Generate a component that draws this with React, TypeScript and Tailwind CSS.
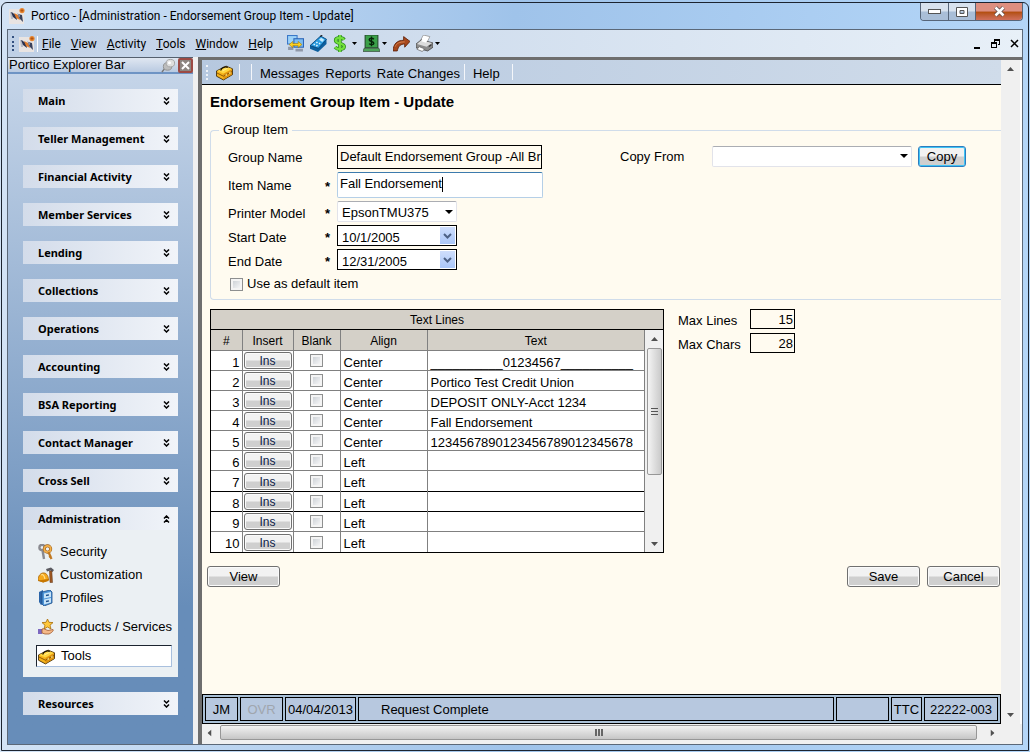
import type { ReactNode } from 'react';

const sections = [
    'Main',
    'Teller Management',
    'Financial Activity',
    'Member Services',
    'Lending',
    'Collections',
    'Operations',
    'Accounting',
    'BSA Reporting',
    'Contact Manager',
    'Cross Sell',
];

const menus = ['File', 'View', 'Activity', 'Tools', 'Window', 'Help'];

const lines = [
    { align: 'Center', text: '__________01234567__________' },
    { align: 'Center', text: 'Portico Test Credit Union' },
    { align: 'Center', text: 'DEPOSIT ONLY-Acct 1234' },
    { align: 'Center', text: 'Fall Endorsement' },
    { align: 'Center', text: '1234567890123456789012345678' },
    { align: 'Left', text: '' },
    { align: 'Left', text: '' },
    { align: 'Left', text: '' },
    { align: 'Left', text: '' },
    { align: 'Left', text: '' },
];

const Svg = ({ size = 16, children }: { size?: number; children: ReactNode }) => (
    <svg width={size} height={size} viewBox="0 0 16 16" className="shrink-0" aria-hidden="true">
        {children}
    </svg>
);

const Logo = () => (
    <Svg>
        <rect y="1" width="15" height="15" fill="#e9e4e2" />
        <path d="M1 4h3v7H2z" fill="#b9bcc6" />
        <path d="M2 4l5 3 1 5-4-3z" fill="#2b3350" />
        <path d="M5 5l4 2 2 5-4-2z" fill="#e07b2c" />
        <path d="M9 6l4 1 1 7-4-4z" fill="#39415c" />
        <path d="M8 5l3 2v3z" fill="#8b93ab" />
        <circle cx="13" cy="2.6" r="2.6" fill="#e8852f" />
        <path d="M11.5 2.6h3M13 1v3" stroke="#a64b10" strokeWidth="0.8" />
    </Svg>
);

const Toolbox = () => (
    <Svg size={17}>
        <path d="M.5 6.500L9.500 2l6 2.500v5.500l-8.500 5-6.500-3.500z" fill="#f6b41c" stroke="#3a2400" strokeWidth="0.8" />
        <path d="M1 6.500L9.500 2.500l5.500 2.200L7 9z" fill="#ffd640" />
        <path d="M7 9.500l8-4.500v4.800L7 14.500z" fill="#e09410" />
        <path d="M1 8.500l6 3 8-4.500" fill="none" stroke="#8a5400" strokeWidth="0.9" />
        <path d="M4.500 6c0-2 5-4.500 6.500-2.500" fill="none" stroke="#1c1200" strokeWidth="1.3" />
        <path d="M6 6.500l5-2.500" stroke="#fff09a" strokeWidth="0.9" />
        <path d="M9 9.800l1.200-.7v1.800l-1.200.7zM12.500 7.800l1.200-.7v1.800l-1.200.7z" fill="#ffe680" />
    </Svg>
);

const Computers = () => (
    <Svg size={17}>
        <path d="M0 0h10v9H0z" fill="#3a78c8" />
        <path d="M1 1h8v7H1z" fill="#9cd2f8" />
        <path d="M6 3h10v9H6z" fill="#2a64b8" />
        <path d="M7 4h8v7H7z" fill="#7cbcf0" />
        <path d="M1 11h5v3H1zM8 13h7v2.500H8z" fill="#8f98a8" />
        <path d="M2 9l3.500-3v2h5V6L14 9l-3.500 3v-2h-5v2z" fill="#ffd21e" stroke="#9a7000" strokeWidth="0.5" />
    </Svg>
);

const Calculator = () => (
    <Svg size={17}>
        <path d="M0 10L10 1l5.500 3v4.500l-8 7.500L0 13z" fill="#0d5f9e" />
        <path d="M0 10L10 1l5.500 3L8 12.500z" fill="#2b9be0" stroke="#063e70" strokeWidth="0.7" />
        <path d="M8.500 4.500L10.500 2.500l3 2-2 2z" fill="#c4ecff" />
        <path d="M3.500 9.500l1-1M6 10.500l1-1M6 7.500l1-1M8.500 8.500l1-1" stroke="#e4f6ff" strokeWidth="1.4" />
        <path d="M9.500 1.500l2-1.500" stroke="#222" />
    </Svg>
);

const Dollar = () => (
    <Svg size={17}>
        <path d="M10.500 4.500C9 2 2.500 2 2.500 5.200c0 3.300 8 2.300 8 5.600 0 3.200-6.500 3.200-8.500.7M6.500 0v16" fill="none" stroke="#2c8a1e" strokeWidth="3.4" />
        <path d="M10.500 4.500C9 2 2.500 2 2.500 5.200c0 3.300 8 2.300 8 5.600 0 3.200-6.500 3.200-8.500.7M6.500 0v16" fill="none" stroke="#72e03c" strokeWidth="2" />
    </Svg>
);

const CashScreen = () => (
    <Svg size={17}>
        <path d="M2 0h12v12H2z" fill="#3aa048" stroke="#234a2a" />
        <path d="M10.200 4C9 2.500 5.800 2.800 5.800 4.500c0 2 4.400 1.300 4.400 3.200 0 1.700-3.200 1.800-4.400.4M8 1.500v9" fill="none" stroke="#052408" strokeWidth="1.3" />
        <path d="M1 12.500h14l1 3H0z" fill="#4fa65a" stroke="#3c5040" strokeWidth="0.7" />
    </Svg>
);

const ForwardArrow = () => (
    <Svg size={17}>
        <path d="M0 15C.5 8 4 5 10 5V1.500L16 6l-5 5.500V8.500c-4 0-6 2-7 6.500z" fill="#a8481c" stroke="#5c2008" strokeWidth="0.8" />
        <path d="M2 11c1.500-3.500 4.500-4.500 9-4.500" fill="none" stroke="#d98a54" strokeWidth="0.8" />
    </Svg>
);

const Printer = () => (
    <Svg size={17}>
        <path d="M7 0l6 1.500-3 6-6-2z" fill="#fff" stroke="#8a8a8a" strokeWidth="0.7" />
        <path d="M0 8.500l5-4 11 3v4l-5 3.500-11-3z" fill="#8c8c8c" stroke="#4a4a4a" strokeWidth="0.8" />
        <path d="M1 8.500l4-3.500 10 2.500-5 3.500z" fill="#dcdcdc" />
        <path d="M7 1l5 1.300-2.500 5-4.500-1.500z" fill="#fff" />
        <path d="M3 11l5 2-2 2.500L1 13.500z" fill="#fff" stroke="#666" strokeWidth="0.7" />
        <path d="M12 10l2.500-1.500V10L12 11.500z" fill="#3a3a3a" />
    </Svg>
);

const Keys = () => (
    <Svg>
        <circle cx="4" cy="3.500" r="2.600" fill="none" stroke="#8a8a90" strokeWidth="2.400" />
        <path d="M4.500 6l1.500 9" stroke="#8a8a90" strokeWidth="2.400" />
        <circle cx="9.500" cy="5" r="3.200" fill="none" stroke="#9a5c14" strokeWidth="3" />
        <circle cx="9.500" cy="5" r="3.200" fill="none" stroke="#f2b04c" strokeWidth="1.800" />
        <path d="M10.500 8l3 7M11 13l2.500-1" stroke="#c07820" strokeWidth="2.200" />
    </Svg>
);

const HardHat = () => (
    <Svg>
        <path d="M8 2l5-1.500L16 3l-1.500 2-2-1.500L9 4.500z" fill="#5a5a60" />
        <path d="M11.500 4h2.300l.7 11.500H12z" fill="#a05a24" stroke="#5c3010" strokeWidth="0.5" />
        <path d="M0 13.500c0-5 3-8 6-7.500 3 0 4.500 4 4.500 7l-5 2z" fill="#f6a81c" stroke="#a86400" strokeWidth="0.8" />
        <path d="M3 8c2-1 3 0 4 4" fill="none" stroke="#ffe08a" strokeWidth="1.2" />
        <path d="M0 13.500l10.500-1.500v2L5 15.500z" fill="#c87800" />
    </Svg>
);

const Cabinet = () => (
    <Svg>
        <path d="M1 2l4-2v14l-2 1-2-3z" fill="#2a64a8" />
        <path d="M4 2l8-2 2 2v11l-8 3-2-2z" fill="#4c94d8" stroke="#1c4c88" strokeWidth="0.8" />
        <path d="M6 3.500L13 2v5L6 8.500zM6 9.500L13 8v4.500L6 14.500z" fill="#c8e4f8" />
        <path d="M8 5.500l3-.6M8 11.500l3-.6" stroke="#1c4c88" strokeWidth="1.4" />
    </Svg>
);

const StarHand = () => (
    <Svg>
        <path d="M9.500 0l1.500 3.300 4 .3-3 2.600 1 3.800-3.500-2L6 10l1-3.800-3-2.600 4-.3z" fill="#ffc83c" stroke="#a86c08" strokeWidth="0.8" />
        <path d="M0 10h4v5H0z" fill="#7c68c0" />
        <path d="M4 10c2-1 4 1 6 1.500l5-1c1 1-1 3-4 4.500H7l-3-1z" fill="#f4b888" stroke="#a0582c" strokeWidth="0.8" />
    </Svg>
);

const Chevrons = ({ up = false }: { up?: boolean }) => (
    <svg width="7" height="8" viewBox="0 0 7 8" className={up ? 'rotate-180' : ''} aria-hidden="true">
        <path d="M1 .5L3.500 3 6 .5M1 4.500L3.500 7 6 4.500" fill="none" stroke="#000" strokeWidth="1.500" />
    </svg>
);

const Drop = () => (
    <svg width="5" height="3" viewBox="0 0 5 3" className="shrink-0" aria-hidden="true">
        <path d="M0 0h5L2.500 3z" fill="#000" />
    </svg>
);

const Triangle = ({ turn }: { turn: string }) => (
    <svg width="7" height="4" viewBox="0 0 7 4" className={turn} aria-hidden="true">
        <path d="M0 4h7L3.500 0z" fill="#505050" />
    </svg>
);

const PushButton = ({ label, look }: { label: string; look: string }) => (
    <button
        type="button"
        className={`rounded-[3px] border bg-linear-to-b from-[#f2f2f2] from-45% to-[#cfcfcf] to-55% text-center shadow-[inset_0_0_0_1px_#fafafa] ${look}`}
    >
        {label}
    </button>
);

const Tick = ({ id, label }: { id?: string; label?: string }) => (
    <input
        type="checkbox"
        id={id}
        aria-label={label}
        className="block size-[13px] shrink-0 appearance-none border border-[#8e8f8f] bg-linear-to-br from-[#c4c9cf] to-white shadow-[inset_0_0_0_2px_#f4f4f4]"
    />
);

const SectionBar = ({ title, open = false }: { title: string; open?: boolean }) => (
    <button
        type="button"
        aria-expanded={open}
        className="flex h-[23px] w-full items-center justify-between bg-linear-to-r from-[#d3dcea] to-[#f1f4f9] pr-2 pl-[15px] font-['Noto_Sans'] text-[11px] font-bold"
    >
        {title}
        <Chevrons up={open} />
    </button>
);

const ExplorerLink = ({ icon, label }: { icon: ReactNode; label: string }) => (
    <a href="#" className="flex h-[23px] items-center gap-1.5 pl-[15px]">
        {icon}
        {label}
    </a>
);

const Sidebar = () => (
    <aside className="flex w-[185px] shrink-0 flex-col bg-linear-to-b from-[#c8d7ea] to-[#678db9] to-80%">
        <div className="flex h-[17px] items-center justify-between border-t border-b-2 border-t-[#55606e] border-b-[#6e94c4] bg-linear-to-b from-[#e0e7f1] to-[#b9cae1] pl-px">
            <span>Portico Explorer Bar</span>
            <span className="flex items-center gap-0.5">
                <button type="button" aria-label="Pin">
                    <Svg size={15}>
                        <path d="M1 15l4-5" stroke="#777" strokeWidth="1.5" />
                        <ellipse cx="7" cy="9" rx="4.500" ry="4" fill="#bdbdbd" stroke="#909090" />
                        <ellipse cx="10" cy="5.500" rx="4.500" ry="4" fill="#dedede" stroke="#a0a0a0" />
                        <circle cx="9" cy="5" r="1.600" fill="#fff" />
                    </Svg>
                </button>
                <button
                    type="button"
                    aria-label="Close explorer bar"
                    className="flex size-[15px] items-center justify-center rounded-xs border-2 border-[#9c4a44] bg-[#8c8580]"
                >
                    <svg width="9" height="9" viewBox="0 0 9 9">
                        <path d="M1 1l7 7M8 1L1 8" stroke="#fff" strokeWidth="2" />
                    </svg>
                </button>
            </span>
        </div>
        <nav className="flex flex-col gap-[15px] px-[15px] pt-[15px] pb-7">
            {sections.map((title) => (
                <SectionBar key={title} title={title} />
            ))}
            <div className="bg-[#ebf0f3] pb-[10px]">
                <SectionBar title="Administration" open />
                <div className="pt-[10px]">
                    <ExplorerLink icon={<Keys />} label="Security" />
                    <ExplorerLink icon={<HardHat />} label="Customization" />
                    <ExplorerLink icon={<Cabinet />} label="Profiles" />
                    <div className="pt-1.5">
                        <ExplorerLink icon={<StarHand />} label="Products / Services" />
                    </div>
                    <a
                        href="#"
                        className="mt-[7px] mr-1.5 ml-[13px] flex h-[22px] items-center gap-1.5 border border-t-[#1c2430] border-r-[#a9c0de] border-b-[#a9c0de] border-l-[#1c2430] bg-white pl-px"
                    >
                        <Toolbox />
                        Tools
                    </a>
                </div>
            </div>
            <SectionBar title="Resources" />
        </nav>
    </aside>
);

const TitleBar = () => (
    <div className="flex h-[26px] items-start justify-between pl-0.5">
        <div className="flex h-[26px] items-center gap-1.5 font-['Roboto'] text-xs">
            <Logo />
            Portico - [Administration - Endorsement Group Item - Update]
        </div>
        <div className="flex h-[18px] overflow-hidden rounded-b-[4px] border border-t-0 border-[#566579]">
            <button type="button" aria-label="Minimize" className="flex w-7 items-center justify-center border-r border-[#566579] bg-linear-to-b from-[#d8e2ee] from-45% to-[#a9bed7] to-55%">
                <svg width="13" height="6" viewBox="0 0 13 6">
                    <rect x=".5" y=".5" width="12" height="4" fill="#fff" stroke="#555" />
                </svg>
            </button>
            <button type="button" aria-label="Maximize" className="flex w-[27px] items-center justify-center border-r border-[#566579] bg-linear-to-b from-[#d8e2ee] from-45% to-[#a9bed7] to-55%">
                <svg width="12" height="10" viewBox="0 0 12 10">
                    <path d="M.5.5h11v9H.5zM4 3.500h4v3H4z" fill="#fff" stroke="#555" fillRule="evenodd" />
                </svg>
            </button>
            <button type="button" aria-label="Close" className="flex w-[46px] items-center justify-center bg-linear-to-b from-[#dd8f80] from-45% via-[#b4500f] via-55% to-[#d0705c]">
                <svg width="13" height="11" viewBox="0 0 13 11">
                    <path d="M2.500 1.500l8 8M10.500 1.500l-8 8" stroke="#5c4a48" strokeWidth="4" />
                    <path d="M2.500 1.500l8 8M10.500 1.500l-8 8" stroke="#fff" strokeWidth="2.500" />
                </svg>
            </button>
        </div>
    </div>
);

const MenuBar = () => (
    <div className="flex h-[27px] items-center bg-linear-to-r from-[#bfd0e6] to-[#e8f0f8] pl-1 font-['Roboto'] text-xs">
        <div className="h-[15px] border-l-2 border-dotted border-[#33507f]" />
        <div className="ml-[5px] border-r border-white pr-0.5">
            <Logo />
        </div>
        <nav className="flex gap-2.5 pl-1">
            {menus.map((name) => (
                <button key={name} type="button">
                    <span className="underline">{name[0]}</span>
                    {name.slice(1)}
                </button>
            ))}
        </nav>
        <div className="flex items-center gap-1.5 pl-3.5">
            <button type="button" aria-label="Connect"><Computers /></button>
            <button type="button" aria-label="Calculator"><Calculator /></button>
            <button type="button" aria-label="Money" className="flex items-center gap-0.5"><Dollar /><Drop /></button>
            <button type="button" aria-label="Cash drawer" className="flex items-center gap-0.5"><CashScreen /><Drop /></button>
            <button type="button" aria-label="Forward"><ForwardArrow /></button>
            <button type="button" aria-label="Print" className="flex items-center gap-0.5"><Printer /><Drop /></button>
        </div>
        <div className="ml-auto flex items-center gap-2.5 pr-[3px]">
            <button type="button" aria-label="Minimize form">
                <svg width="8" height="10" viewBox="0 0 8 10"><path d="M1 8h6v2H1z" /></svg>
            </button>
            <button type="button" aria-label="Restore form">
                <svg width="9" height="9" viewBox="0 0 9 9">
                    <path d="M3 0h6v6H7V5h1V2H4v1H3zM0 3h6v6H0zM1 5v3h4V5z" fillRule="evenodd" />
                </svg>
            </button>
            <button type="button" aria-label="Close form">
                <svg width="9" height="9" viewBox="0 0 9 9"><path d="M1 1l7 7M8 1L1 8" stroke="#000" strokeWidth="1.500" /></svg>
            </button>
        </div>
    </div>
);

const Toolbar = () => (
    <div className="flex h-[25px] items-center border-b border-black bg-linear-to-r from-[#b6c8df] to-[#d0dcea] pl-1">
        <div className="h-[15px] border-l-2 border-dotted border-[#eef2f8]" />
        <button type="button" aria-label="Toolbox" className="ml-2"><Toolbox /></button>
        <div className="ml-1.5 h-4 border-l border-[#f4f6fa]" />
        <div className="ml-[11px] h-4 border-l border-[#f4f6fa]" />
        <div className="flex gap-1.5 pt-1 pl-2">
            <button type="button">Messages</button>
            <button type="button">Reports</button>
            <button type="button">Rate Changes</button>
        </div>
        <div className="ml-1 h-4 border-l border-[#f4f6fa]" />
        <button type="button" className="pt-1 pl-2">Help</button>
        <div className="ml-3 h-4 border-l border-[#f4f6fa]" />
    </div>
);

const Required = () => <span className="pt-1 leading-3 font-bold">*</span>;

const DateBox = ({ id, value }: { id: string; value: string }) => (
    <div className="flex h-[21px] w-[120px] border border-black bg-white p-px">
        <input id={id} defaultValue={value} className="w-full min-w-0 pt-1 pl-[3px] outline-none" />
        <button type="button" aria-label="Open calendar" className="flex w-[15px] shrink-0 items-center justify-center bg-linear-to-b from-[#cfdefc] to-[#aac6f8]">
            <svg width="9" height="6" viewBox="0 0 9 6">
                <path d="M1 1l3.500 3.500L8 1" fill="none" stroke="#4d6185" strokeWidth="2" />
            </svg>
        </button>
    </div>
);

const GroupItem = () => (
    <fieldset className="ml-2 h-[178px] rounded-l-sm border border-r-0 border-[#d0dcea]">
        <legend className="ml-2 px-1 leading-4">Group Item</legend>
        <div className="flex items-start pt-[7px] pl-[17px]">
            <div className="grid w-[375px] grid-cols-[97px_12px_1fr] items-center gap-y-[3px]">
                <label htmlFor="group-name" className="pt-0.5">Group Name</label>
                <span />
                <input id="group-name" readOnly defaultValue="Default Endorsement Group -All Branches" className="h-6 w-[205px] border border-black pb-0.5 pl-0.5 outline-none" />

                <label htmlFor="item-name" className="pt-0.5">Item Name</label>
                <Required />
                <div className="flex h-[26px] w-[206px] items-center rounded-xs border border-[#b5cfe7] border-t-[#3d7bad] bg-white pb-0.5 pl-0.5">
                    <input id="item-name" defaultValue="Fall Endorsement" className="field-sizing-content outline-none" />
                    <span className="h-[15px] border-l border-black" />
                </div>

                <label htmlFor="printer" className="pt-1">Printer Model</label>
                <Required />
                <div className="grid w-[120px] items-center">
                    <select id="printer" className="col-start-1 row-start-1 h-[21px] appearance-none rounded-xs border border-[#e2e3ea] border-t-[#abadb3] bg-white pt-0.5 pl-1">
                        <option>EpsonTMU375</option>
                    </select>
                    <svg width="8" height="4" viewBox="0 0 8 4" className="pointer-events-none col-start-1 row-start-1 mr-1 justify-self-end">
                        <path d="M0 0h8L4 4z" />
                    </svg>
                </div>

                <label htmlFor="start" className="pt-1">Start Date</label>
                <Required />
                <DateBox id="start" value="10/1/2005" />

                <label htmlFor="end" className="pt-1">End Date</label>
                <Required />
                <DateBox id="end" value="12/31/2005" />

                <div className="col-span-3 flex items-center gap-1 pt-[3px] pl-0.5">
                    <Tick id="default-item" />
                    <label htmlFor="default-item">Use as default item</label>
                </div>
            </div>
            <div className="flex items-center pl-[17px]">
                <label htmlFor="copy-from" className="w-[92px] pt-0.5">Copy From</label>
                <div className="grid w-[200px] items-center">
                    <select id="copy-from" className="col-start-1 row-start-1 h-[21px] appearance-none rounded-xs border border-[#e2e3ea] border-t-[#abadb3] bg-white pl-1">
                        <option></option>
                    </select>
                    <svg width="8" height="4" viewBox="0 0 8 4" className="pointer-events-none col-start-1 row-start-1 mr-1 justify-self-end">
                        <path d="M0 0h8L4 4z" />
                    </svg>
                </div>
                <PushButton label="Copy" look="ml-1.5 mt-px h-[21px] w-12 border-[#2c7cc0] ring-1 ring-inset ring-[#40c4f4]" />
            </div>
        </div>
    </fieldset>
);

const TextLines = () => (
    <div className="w-[454px] border border-black bg-white">
        <div className="h-5 border-b border-black bg-[#d4d0c8] text-center text-xs leading-5">Text Lines</div>
        <div className="flex">
            <table className="w-[434px] table-fixed border-collapse">
                <thead>
                    <tr className="h-5 bg-[#d4d0c8] text-xs">
                        <th className="w-[31px] border-r border-b border-[#808080] p-0 pt-0.5 font-normal">#</th>
                        <th className="w-[51px] border-r border-b border-[#808080] p-0 pt-0.5 font-normal">Insert</th>
                        <th className="w-[47px] border-r border-b border-[#808080] p-0 pt-0.5 font-normal">Blank</th>
                        <th className="w-[87px] border-r border-b border-[#808080] p-0 pt-0.5 font-normal">Align</th>
                        <th className="border-r border-b border-[#808080] p-0 pt-0.5 font-normal">Text</th>
                    </tr>
                </thead>
                <tbody>
                    {lines.map((line, i) => (
                        <tr
                            key={i}
                            className={`border-b leading-4 last:border-b-0 ${i === 6 || i === 9 ? 'h-[21px]' : 'h-5'} ${i === 6 || i === 7 ? 'border-black' : 'border-[#808080]'}`}
                        >
                            <td className="border-r border-[#808080] p-0 pt-1 pr-0.5 text-right leading-[15px]">{i + 1}</td>
                            <td className="border-r border-[#808080] p-0 px-px pt-px">
                                <PushButton label="Ins" look="block h-[17px] w-full border-[#707070] text-xs leading-4 text-[#0c1c48]" />
                            </td>
                            <td className="border-r border-[#808080] p-0 pt-px">
                                <div className="flex justify-center">
                                    <Tick label={`Blank line ${i + 1}`} />
                                </div>
                            </td>
                            <td className="border-r border-[#808080] p-0 pt-1 pl-[3px] leading-[15px]">{line.align}</td>
                            <td className="border-r border-[#808080] p-0 pt-1 pl-[3px] leading-[15px]">{line.text}</td>
                        </tr>
                    ))}
                </tbody>
            </table>
            <div className="flex flex-1 flex-col items-center bg-[#f0f0f0] pt-[7px] pb-1.5">
                <Triangle turn="" />
                <div className="mt-[7px] flex h-[127px] w-[15px] flex-col items-center justify-center gap-px rounded-xs border border-[#979797] bg-linear-to-r from-[#f4f4f4] to-[#cacaca]">
                    <div className="h-0.5 w-[7px] border-t border-[#555]" />
                    <div className="h-0.5 w-[7px] border-t border-[#555]" />
                    <div className="h-0.5 w-[7px] border-t border-[#555]" />
                </div>
                <div className="mt-auto">
                    <Triangle turn="rotate-180" />
                </div>
            </div>
        </div>
    </div>
);

const StatusBar = () => (
    <div className="flex h-[30px] gap-0.5 border border-black bg-[#a9c0d6] p-0.5 leading-6">
        <div className="w-[33px] border border-black bg-[#b7c8df] text-center">JM</div>
        <div className="w-[43px] border border-black bg-[#b7c8df] text-center text-[#a0a6ae]">OVR</div>
        <div className="w-[71px] border border-black bg-[#b7c8df] text-center whitespace-nowrap">04/04/2013</div>
        <div className="flex-1 border border-black bg-[#b7c8df] pl-[22px]">Request Complete</div>
        <div className="w-[53px] border border-black bg-[#b7c8df]" />
        <div className="w-[31px] border border-black bg-[#b7c8df] text-center">TTC</div>
        <div className="w-[74px] border border-black bg-[#b7c8df] text-center">22222-003</div>
    </div>
);

const App = () => {
    return (
        <div className="flex min-h-screen flex-col bg-linear-to-r from-[#d3e3f5] via-[#9fc3ea] to-[#b4d6f8] p-px pt-0.5 font-['Liberation_Sans',sans-serif] text-[13px] leading-4 text-black">
            <div className="flex flex-1 flex-col rounded-t-md border border-[#1c2430] px-[5px] pb-[5px]">
                <TitleBar />
                <div className="flex flex-1 flex-col border border-[#5b6878] bg-[#f0f0f0]">
                    <MenuBar />
                    <div className="flex flex-1">
                        <Sidebar />
                        <div className="ml-[5px] flex min-w-0 flex-1 flex-col border-t-[3px] border-l-4 border-[#6e6e6e]">
                            <div className="flex flex-1">
                                <main className="flex min-w-0 flex-1 flex-col bg-[#fffbf0]">
                                    <Toolbar />
                                    <h1 className="pt-2 pb-[11px] pl-2 text-[15px] leading-[18px] font-bold">Endorsement Group Item - Update</h1>
                                    <GroupItem />
                                    <div className="flex items-start pt-[9px] pl-2">
                                        <TextLines />
                                        <div className="grid grid-cols-[72px_45px] items-start gap-y-1 pl-3.5">
                                            <label htmlFor="max-lines" className="pt-1">Max Lines</label>
                                            <input id="max-lines" readOnly defaultValue="15" className="h-5 border border-black pr-px text-right outline-none" />
                                            <label htmlFor="max-chars" className="pt-1">Max Chars</label>
                                            <input id="max-chars" readOnly defaultValue="28" className="h-5 border border-black pr-px text-right outline-none" />
                                        </div>
                                    </div>
                                    <div className="flex gap-[7px] pt-[13px] pr-px pl-[5px]">
                                        <PushButton label="View" look="h-[21px] w-[73px] border-[#707070]" />
                                        <PushButton label="Save" look="ml-auto h-[21px] w-[73px] border-[#707070]" />
                                        <PushButton label="Cancel" look="h-[21px] w-[73px] border-[#707070]" />
                                    </div>
                                    <div className="mt-auto">
                                        <StatusBar />
                                    </div>
                                </main>
                                <div className="flex w-[21px] shrink-0 flex-col items-center justify-between border-r-2 border-white bg-[#f0f0f0] py-[7px]">
                                    <Triangle turn="" />
                                    <Triangle turn="rotate-180" />
                                </div>
                            </div>
                            <div className="mb-[3px] flex h-[17px] items-center pr-[26px] pl-1">
                                <Triangle turn="-rotate-90" />
                                <div className="mr-3 ml-[7px] flex h-[15px] flex-1 items-center justify-center gap-px rounded-xs border border-[#979797] bg-linear-to-b from-[#f2f2f2] to-[#c6c6c6]">
                                    <div className="h-[7px] border-l-2 border-[#666]" />
                                    <div className="h-[7px] border-l-2 border-[#666]" />
                                    <div className="h-[7px] border-l-2 border-[#666]" />
                                </div>
                                <Triangle turn="rotate-90" />
                            </div>
                        </div>
                    </div>
                </div>
            </div>
        </div>
    );
};

export default App;
